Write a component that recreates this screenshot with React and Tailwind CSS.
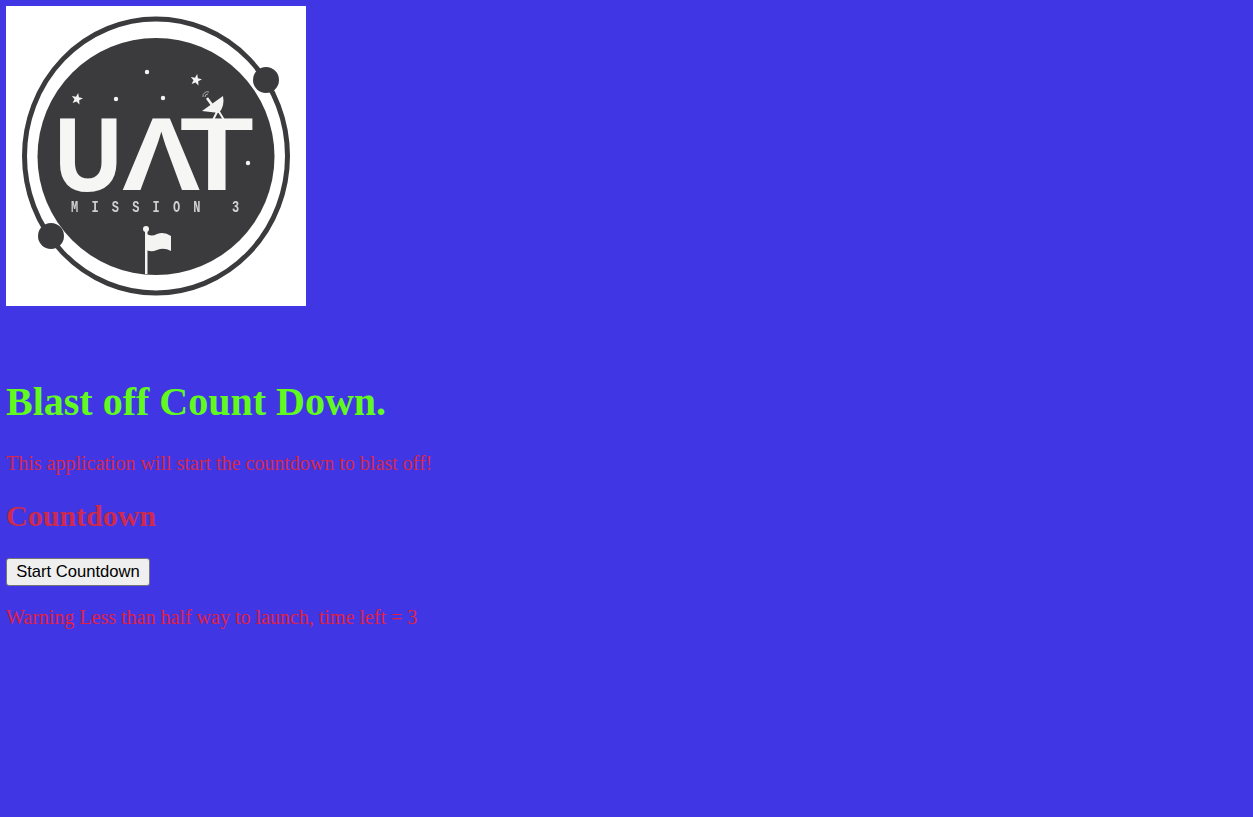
function Logo() {
  const dark = "#3b3b3e";
  const star = (cx, cy, r) => {
    const pts = [];
    for (let i = 0; i < 10; i++) {
      const a = -Math.PI / 2 + (i * Math.PI) / 5 + 0.2;
      const rr = i % 2 ? r * 0.42 : r;
      pts.push(`${(cx + rr * Math.cos(a)).toFixed(1)},${(cy + rr * Math.sin(a)).toFixed(1)}`);
    }
    return <polygon points={pts.join(" ")} fill="#f4f4f2" />;
  };
  return (
    <svg width="300" height="300" viewBox="6 6 300 300" className="block bg-white">
      <defs>
        <filter id="soft" x="-5%" y="-5%" width="110%" height="110%">
          <feGaussianBlur stdDeviation="0.5" />
        </filter>
      </defs>
      <g filter="url(#soft)">
        <ellipse cx="156" cy="156" rx="131.5" ry="137" fill="none" stroke={dark} strokeWidth="5" />
        <circle cx="156" cy="156.5" r="118.5" fill={dark} />
        <circle cx="266" cy="80" r="13" fill={dark} />
        <circle cx="51" cy="236" r="13" fill={dark} />
        {star(77, 99, 6)}
        {star(196, 80, 6)}
        <circle cx="147" cy="72" r="2.2" fill="#f4f4f2" />
        <circle cx="116" cy="99" r="2.2" fill="#f4f4f2" />
        <circle cx="163" cy="98" r="2.2" fill="#f4f4f2" />
        <circle cx="248" cy="163" r="2.2" fill="#f4f4f2" />
        {/* dish */}
        <path d="M202 111 L223 96 Q225 106 219 113 Z" fill="#f4f4f2" />
        <path d="M218 110 L213 120 M218 110 L224 120" stroke="#f4f4f2" strokeWidth="2" fill="none" />
        <path d="M207 98 L212 105" stroke="#f4f4f2" strokeWidth="2.5" />
        <path d="M203 97 A4.5 4.5 0 0 1 209 92" stroke="#a9a9a9" strokeWidth="1" fill="none" />
        <path d="M205 97 A3 3 0 0 1 208 94" stroke="#a9a9a9" strokeWidth="1" fill="none" />
        {/* letters */}
        <g fill="#f6f6f4" fontFamily="'Liberation Sans', sans-serif" fontWeight="700">
          <text transform="translate(55.5 190) scale(0.89 1)" fontSize="102" stroke="#f6f6f4" strokeWidth="2">U</text>
          <text transform="translate(122 190) scale(1.14 1)" fontSize="103">Λ</text>
          <text transform="translate(180 190) scale(1.17 1)" fontSize="103">T</text>
        </g>
        <g fill="#d0d0d0" fontFamily="'Liberation Mono', monospace" fontWeight="700" fontSize="16">
          <text transform="translate(71 212) scale(0.75 1.08)" letterSpacing="17.6">MISSION</text>
          <text transform="translate(232 212) scale(0.75 1.08)">3</text>
        </g>
        {/* flag */}
        <rect x="145" y="230" width="2.5" height="44" fill="#f4f4f2" />
        <circle cx="146" cy="229" r="3" fill="#f4f4f2" />
        <path d="M145 232 Q150 238 157 234 Q164 231 171 236 L171 251 Q164 247 157 250 Q150 253 145 249 Z" fill="#f4f4f2" />
      </g>
    </svg>
  );
}

export default function App() {
  return (
    <div className="min-h-[817px] bg-[#4036e4] p-[6px] font-['Liberation_Serif',serif]">
      <Logo />
      <h1 className="mt-[73px] text-[40px] leading-[46px] font-bold text-[#62fa1e]">Blast off Count Down.</h1>
      <p className="mt-[27px] text-[20px] leading-[23px] text-[#d9264a]">This application will start the countdown to blast off!</p>
      <h2 className="mt-[24px] text-[30px] leading-[34px] font-bold text-[#cc2a4e]">Countdown</h2>
      <button className="mt-[25px] block h-[28px] w-[144px] rounded-[3px] border border-[#767676] bg-[#efefef] text-center font-['Liberation_Sans',sans-serif] text-[16.6px] text-black">
        Start Countdown
      </button>
      <p className="mt-[20px] text-[20px] leading-[23px] text-[#e0203f]">Warning Less than half way to launch, time left = 3</p>
    </div>
  );
}
